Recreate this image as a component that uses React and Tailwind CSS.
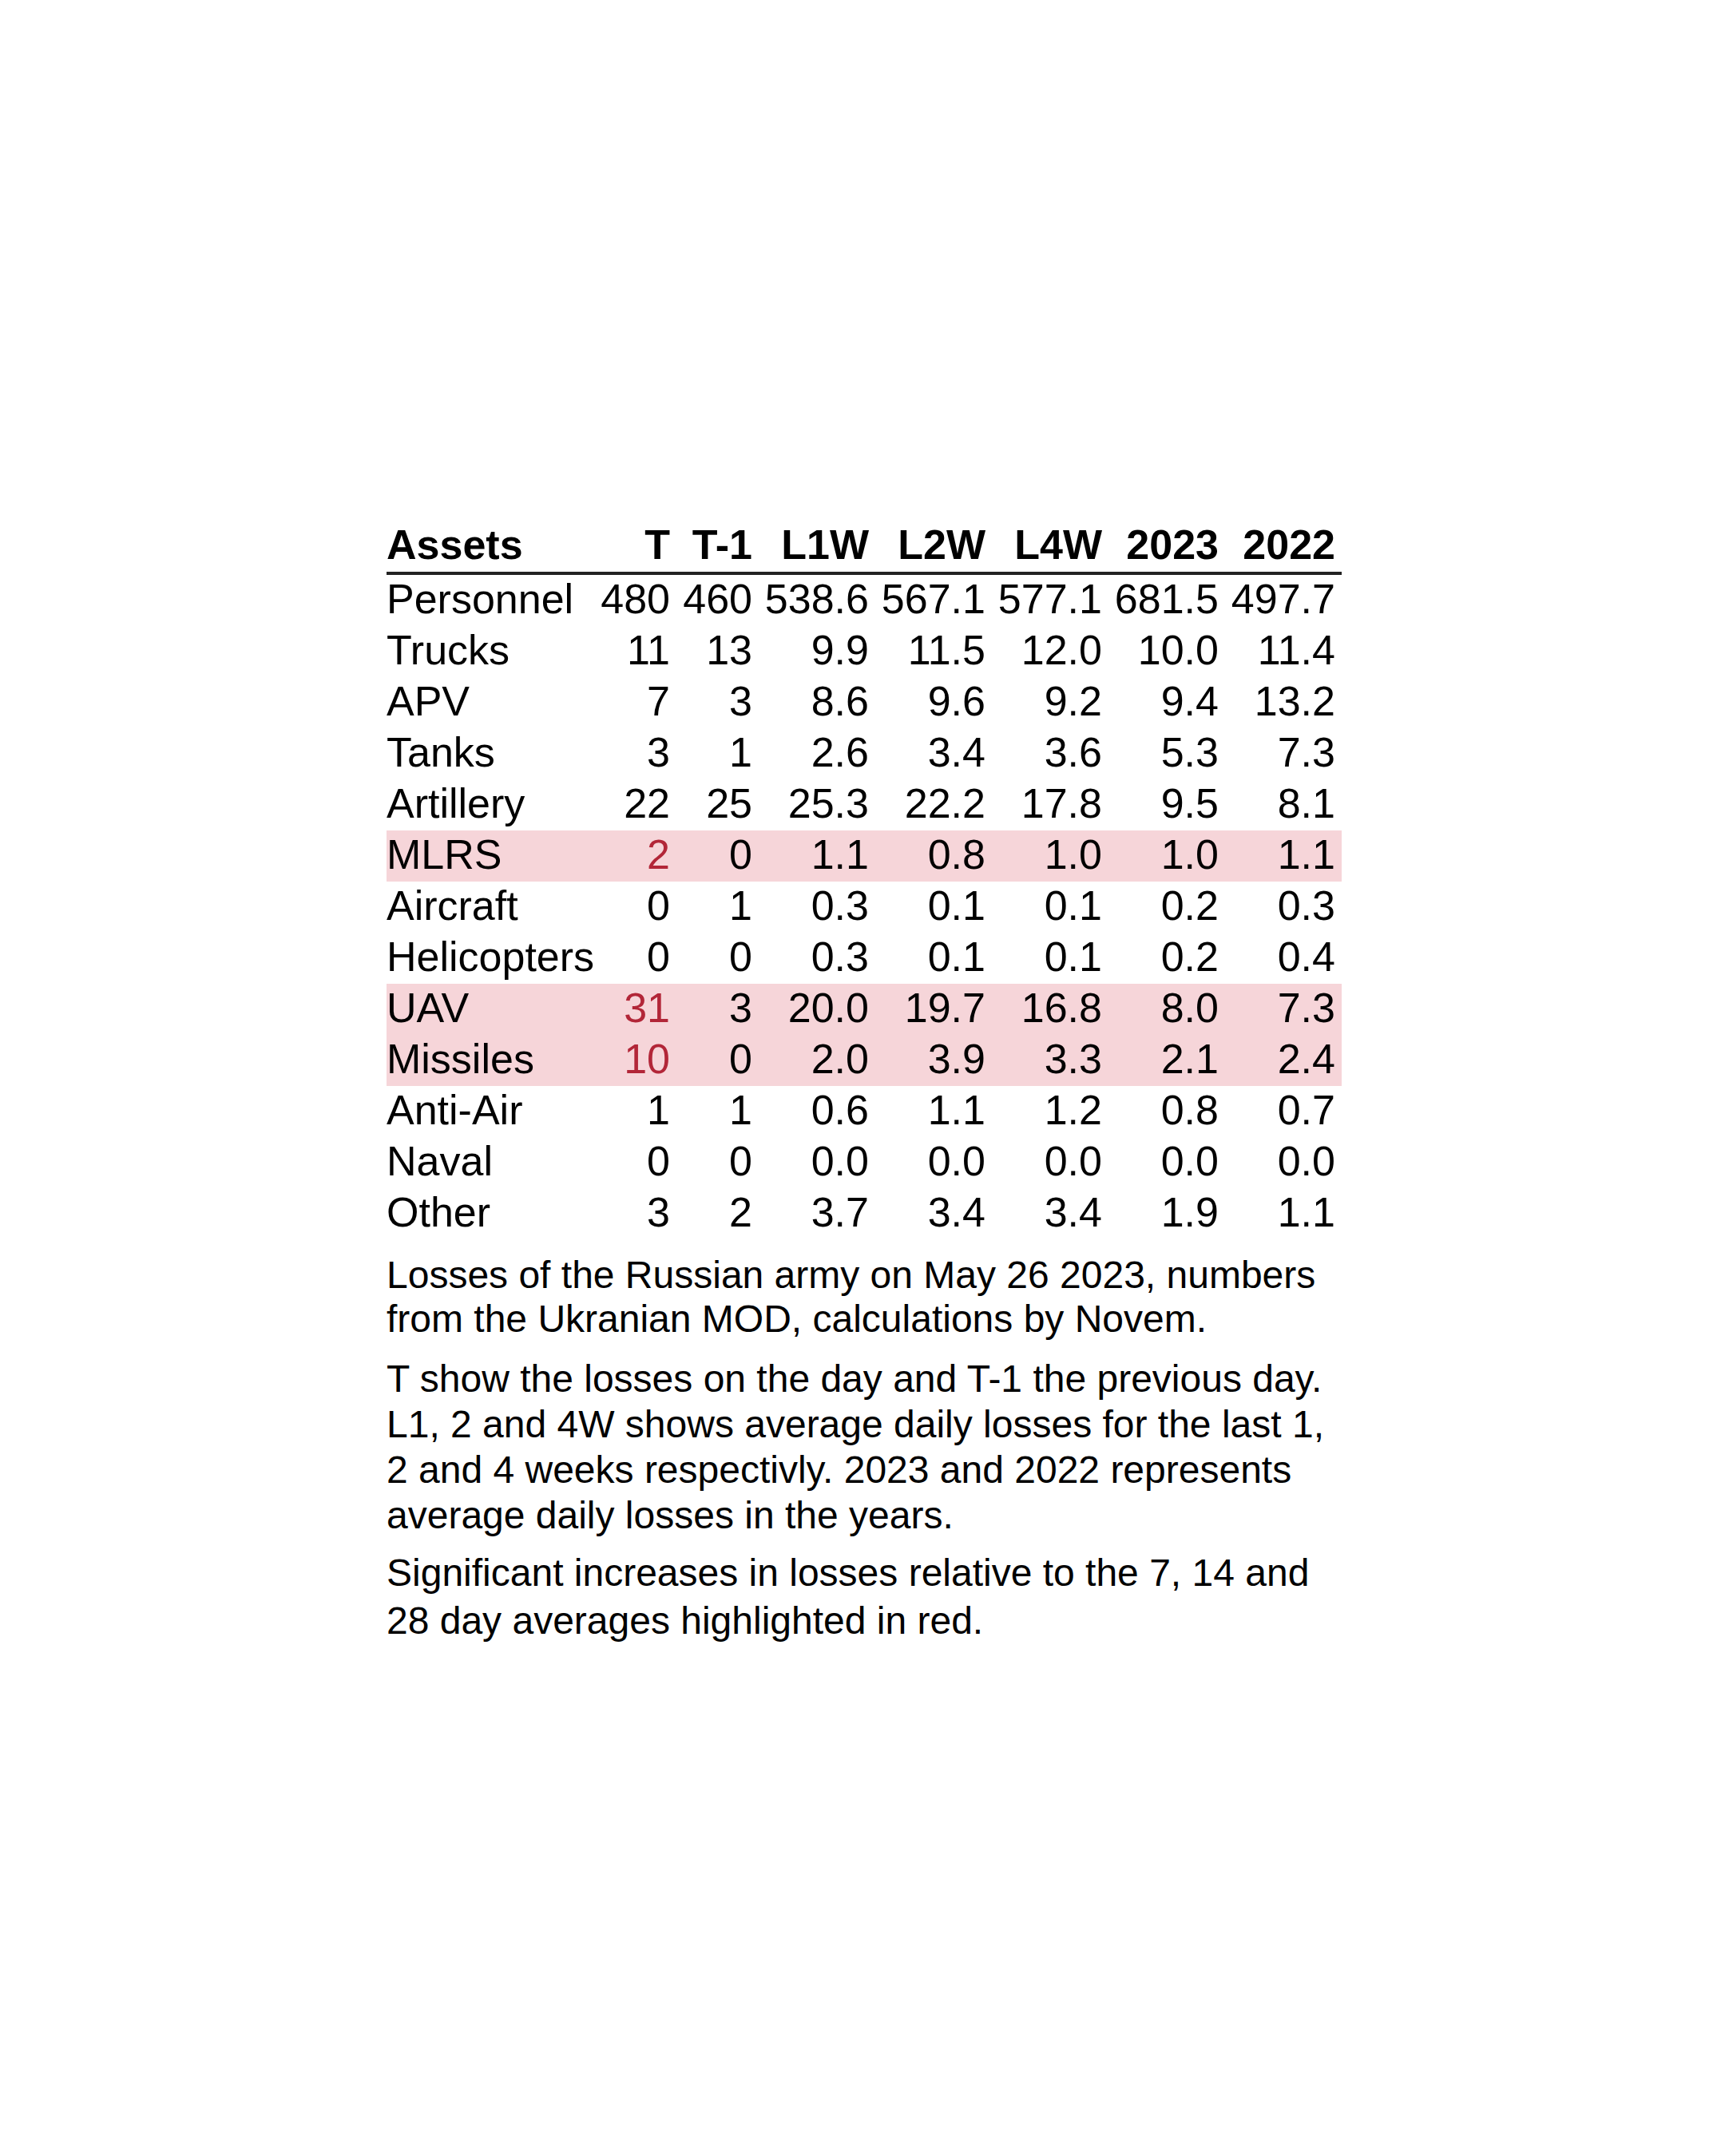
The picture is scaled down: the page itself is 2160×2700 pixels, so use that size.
const columns = ["T", "T-1", "L1W", "L2W", "L4W", "2023", "2022"];

// red: value flagged as a significant increase
const rows = [
  { name: "Personnel", values: ["480", "460", "538.6", "567.1", "577.1", "681.5", "497.7"] },
  { name: "Trucks", values: ["11", "13", "9.9", "11.5", "12.0", "10.0", "11.4"] },
  { name: "APV", values: ["7", "3", "8.6", "9.6", "9.2", "9.4", "13.2"] },
  { name: "Tanks", values: ["3", "1", "2.6", "3.4", "3.6", "5.3", "7.3"] },
  { name: "Artillery", values: ["22", "25", "25.3", "22.2", "17.8", "9.5", "8.1"] },
  { name: "MLRS", values: ["2", "0", "1.1", "0.8", "1.0", "1.0", "1.1"], red: true },
  { name: "Aircraft", values: ["0", "1", "0.3", "0.1", "0.1", "0.2", "0.3"] },
  { name: "Helicopters", values: ["0", "0", "0.3", "0.1", "0.1", "0.2", "0.4"] },
  { name: "UAV", values: ["31", "3", "20.0", "19.7", "16.8", "8.0", "7.3"], red: true },
  { name: "Missiles", values: ["10", "0", "2.0", "3.9", "3.3", "2.1", "2.4"], red: true },
  { name: "Anti-Air", values: ["1", "1", "0.6", "1.1", "1.2", "0.8", "0.7"] },
  { name: "Naval", values: ["0", "0", "0.0", "0.0", "0.0", "0.0", "0.0"] },
  { name: "Other", values: ["3", "2", "3.7", "3.4", "3.4", "1.9", "1.1"] },
];

const grid = "grid grid-cols-[260px_103px_103px_146px_146px_146px_146px_146px]";

const App = () => {
  return (
    <div className="min-h-[2700px] w-full bg-white pt-[652px] pl-[4px] flex justify-center text-black font-['Liberation_Sans',Arial,sans-serif]">
      <div className="w-[1196px]">
        {/* header */}
        <div className={`${grid} border-b-4 border-[#222222] pb-[4px] text-[52px] leading-[60px] font-bold`}>
          <div className="whitespace-nowrap">Assets</div>
          {columns.map((c) => (
            <div key={c} className="text-right pr-[8px] whitespace-nowrap">
              {c}
            </div>
          ))}
        </div>

        {/* body */}
        <div className="text-[52px]">
          {rows.map((r) => (
            <div
              key={r.name}
              className={`${grid} h-[64px] leading-[60px] ${r.red ? "bg-[#f6d5d9]" : ""}`}
            >
              <div className="whitespace-nowrap">{r.name}</div>
              {r.values.map((v, i) => (
                <div
                  key={i}
                  className={`text-right pr-[8px] whitespace-nowrap ${r.red && i === 0 ? "text-[#b22638]" : ""}`}
                >
                  {v}
                </div>
              ))}
            </div>
          ))}
        </div>

        {/* notes */}
        <div className="text-[48px] mt-[17px]">
          <p className="leading-[55px] whitespace-nowrap">
            Losses of the Russian army on May 26 2023, numbers
            <br />
            from the Ukranian MOD, calculations by Novem.
          </p>
          <p className="leading-[57px] whitespace-nowrap mt-[19px]">
            T show the losses on the day and T-1 the previous day.
            <br />
            L1, 2 and 4W shows average daily losses for the last 1,
            <br />
            2 and 4 weeks respectivly. 2023 and 2022 represents
            <br />
            average daily losses in the years.
          </p>
          <p className="leading-[60px] whitespace-nowrap mt-[14px]">
            Significant increases in losses relative to the 7, 14 and
            <br />
            28 day averages highlighted in red.
          </p>
        </div>
      </div>
    </div>
  );
};

export default App;
